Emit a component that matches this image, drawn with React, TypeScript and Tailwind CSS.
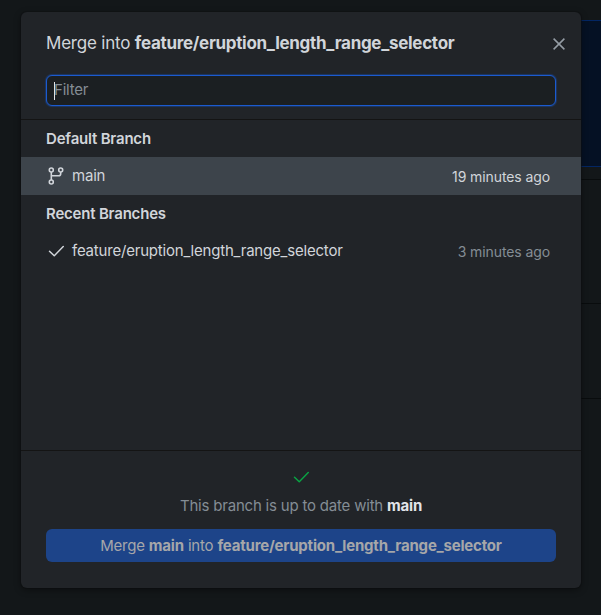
import React from "react";

const branch = "feature/eruption_length_range_selector";

function CheckIcon({ className }: { className: string }) {
  return (
    <svg viewBox="0 0 16 16" className={className} fill="currentColor">
      <path d="M15.78 2.97a.75.75 0 0 1 0 1.06l-9 9.25a.75.75 0 0 1-1.06 0L.97 8.78a.75.75 0 0 1 1.06-1.06l4.22 3.97 8.47-8.72a.75.75 0 0 1 1.06 0Z" />
    </svg>
  );
}

function BranchIcon() {
  return (
    <svg viewBox="0 0 18 20" className="h-5 w-[18px] text-[#d1d5da]" fill="none" stroke="currentColor" strokeWidth="1.6">
      <circle cx="4.3" cy="4" r="2" />
      <circle cx="13.7" cy="4" r="2" />
      <circle cx="4.3" cy="16" r="2" />
      <path d="M4.3 6v8M13.7 6v1.8a2 2 0 0 1-2 2H4.3" />
    </svg>
  );
}

function Page() {
  return (
    <div className="flex h-full flex-col bg-[#131719]">
      <div className="h-5" />
      <div className="h-[147px] border-y border-[#032663] bg-[#051124]" />
      <div className="h-[13px] border-b border-[#090c0d]" />
      <div className="h-[124px] border-b border-[#090c0d]" />
      <div className="h-[95px] border-b border-[#090c0d]" />
    </div>
  );
}

export default function App() {
  return (
    <div className="relative h-[615px] w-[601px] overflow-hidden bg-[#131719] font-['Inter',sans-serif] text-[#d1d5da]">
      <div className="absolute inset-y-0 right-0 w-[30px]">
        <Page />
      </div>
      <section className="absolute top-3 left-[21px] flex h-[576px] w-[560px] flex-col overflow-hidden rounded-[6px] bg-[#212428] shadow-[0_2px_7px_rgba(0,0,0,0.4),0_0_0_1px_rgba(16,18,19,0.5)]">
        <header className="flex h-[63px] items-center justify-between pr-4 pl-[25px]">
          <h1 className="text-[17px] whitespace-nowrap">
            <span className="tracking-[-0.2px]">Merge into </span>
            <b className="font-bold tracking-[-0.3px]">{branch}</b>
          </h1>
          <svg viewBox="0 0 12 12" className="h-3 w-3 text-[#959da5]" stroke="currentColor" strokeWidth="1.5">
            <path d="M.6.6l10.8 10.8M11.4.6.6 11.4" />
          </svg>
        </header>
        <div className="h-[45px] shrink-0 border-b border-[#141414] px-[25px]">
          <div className="flex h-[31px] items-center rounded-[6px] border border-[#1b5bd0] bg-[#1b1f22] pl-[7px] shadow-[0_0_1px_1px_rgba(27,91,208,0.35)]">
            <span className="h-[18px] w-px bg-[#e1e4e8]" />
            <span className="-ml-px text-[15px] tracking-[-0.2px] text-[#848d95]">Filter</span>
          </div>
        </div>
        <div className="flex h-[331px] shrink-0 flex-col border-b border-[#141414] text-[15px]">
          <h2 className="flex h-[37px] items-center pt-[2px] pl-[25px] font-semibold tracking-[-0.2px]">Default Branch</h2>
          <div className="flex h-[38px] items-center bg-[#3d444b] pr-[31px] pl-[26px]">
            <BranchIcon />
            <span className="ml-[7px] grow tracking-[-0.2px]">main</span>
            <span className="text-[14px] tracking-[-0.1px]">19 minutes ago</span>
          </div>
          <h2 className="flex h-[37px] items-center pt-[2px] pl-[25px] font-semibold tracking-[-0.2px]">Recent Branches</h2>
          <div className="flex h-[38px] items-center pr-[31px] pl-[27px]">
            <CheckIcon className="h-4 w-4" />
            <span className="ml-2 grow tracking-[-0.2px]">{branch}</span>
            <span className="text-[14px] tracking-[-0.1px] text-[#848d95]">3 minutes ago</span>
          </div>
        </div>
        <footer className="flex flex-col items-center px-[25px] pt-[18px] text-[15px]">
          <CheckIcon className="h-4 w-4 text-[#0aa344]" />
          <p className="mt-[10px] h-[22px] leading-[22px] text-[#848d95]">
            <span className="tracking-[-0.2px]">This branch is up to date with </span>
            <b className="font-bold tracking-[-0.2px] text-[#e1e4e8]">main</b>
          </p>
          <button className="mt-3 h-[33px] w-full rounded-[6px] bg-[#1d4489] pt-px text-[#a6a7a9]">
            <span className="tracking-[-0.2px]">Merge </span>
            <b className="font-bold tracking-[-0.2px]">main</b>
            <span className="tracking-[-0.2px]"> into </span>
            <b className="font-bold tracking-[-0.2px]">{branch}</b>
          </button>
        </footer>
      </section>
    </div>
  );
}
